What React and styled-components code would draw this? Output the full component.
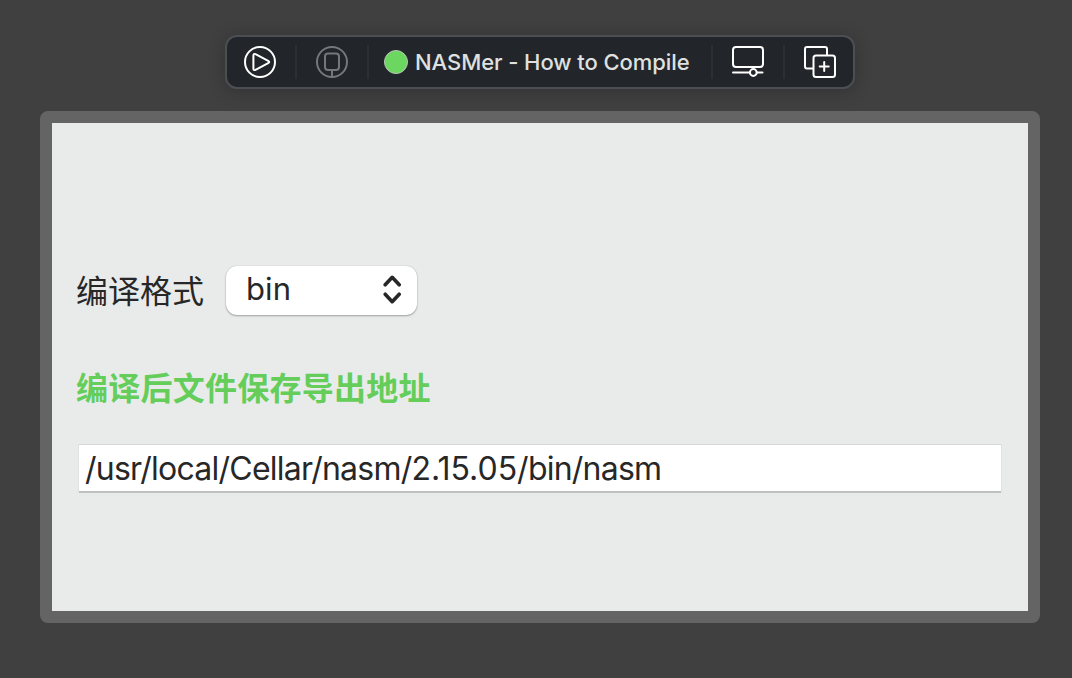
import React from "react";
import styled, { createGlobalStyle } from "styled-components";

const GlobalStyle = createGlobalStyle`
  * { box-sizing: border-box; }
  body {
    margin: 0;
    background: #404040;
    font-family: Inter, "Noto Sans CJK SC", sans-serif;
  }
`;

const Desktop = styled.div`
  height: 678px;
  padding: 35px 32px 0 40px;
  display: flex;
  flex-direction: column;
  align-items: center;
  gap: 22px;
  overflow: hidden;
`;

const Toolbar = styled.header`
  display: flex;
  align-items: center;
  width: 630px;
  height: 54px;
  border: 2px solid #4b4f54;
  border-radius: 12px;
  background: #222529;
  box-shadow: 0 2px 18px rgba(0, 0, 0, 0.24);
`;

const ToolButton = styled.button`
  display: flex;
  flex-shrink: 0;
  align-items: center;
  justify-content: center;
  width: ${(p) => p.$width || 70}px;
  height: 50px;
  padding: 0;
  border: 0;
  background: none;
  color: ${(p) => (p.$dim ? "#75777a" : "#ffffff")};
`;

const Divider = styled.span`
  flex-shrink: 0;
  width: 2px;
  height: 34px;
  background: #2c2f33;
`;

const Title = styled.div`
  display: flex;
  flex-shrink: 0;
  align-items: center;
  width: 342px;
  padding-left: 15px;
  color: #dfe0e0;
  font-size: 22px;
  line-height: 28px;
  font-weight: 500;
  letter-spacing: -0.07px;
  white-space: nowrap;
`;

const Status = styled.span`
  width: 24px;
  height: 24px;
  margin-right: 7px;
  border: 1px solid #b9c4b7;
  border-radius: 50%;
  background: #6bd660;
`;

const Canvas = styled.main`
  position: relative;
  display: flex;
  flex-direction: column;
  width: 1000px;
  height: 512px;
  padding: 141px 25px 0 24px;
  border: 12px solid #646464;
  border-radius: 8px;
  background: #e9ebea;
  background-clip: padding-box;
  color: #272727;
  font-size: 32px;
`;

const FormatRow = styled.div`
  display: flex;
  align-items: center;
  height: 52px;
  gap: 22px;
`;

const Label = styled.label`
  width: 128px;
  padding-top: 4px;
  font-weight: 400;
  line-height: 48px;
  white-space: nowrap;
`;

const Select = styled.button`
  display: flex;
  align-items: center;
  justify-content: space-between;
  width: 191px;
  height: 49px;
  padding: 0 14px 2px 20px;
  border: 0;
  border-radius: 11px;
  background: #fff;
  box-shadow: 0 0 1px rgba(0, 0, 0, 0.25), 0 1px 2px rgba(0, 0, 0, 0.3);
  color: #272727;
  font: inherit;
  font-size: 31px;
`;

const Choice = styled.span`
  padding-bottom: 2px;
  letter-spacing: 0.1px;
`;

const Heading = styled.h1`
  margin: 49px 0 0;
  color: #65cd5a;
  font-size: 32px;
  line-height: 48px;
  font-weight: 700;
  letter-spacing: 0.25px;
  white-space: nowrap;
`;

const PathField = styled.div`
  width: 922px;
  height: 49px;
  margin: 31px 0 0 3px;
  padding-left: 6px;
  border-top: 1px solid #d5d7d6;
  border-bottom: 2px solid #bfc0c0;
  box-shadow: 1px 0 0 #e0e2e1, -1px 0 0 #e0e2e1;
  background: #fff;
  line-height: 47px;
  letter-spacing: -0.76px;
  white-space: nowrap;
`;

const Version = styled.span`
  letter-spacing: 0;
`;

const Icon = ({ children, size = 34 }) => (
  <svg
    width={size}
    height={size}
    viewBox="0 0 34 34"
    fill="none"
    stroke="currentColor"
    strokeWidth="2"
    strokeLinecap="round"
    strokeLinejoin="round"
  >
    {children}
  </svg>
);

export default function App() {
  return (
    <>
      <GlobalStyle />
      <Desktop>
        <Toolbar>
          <ToolButton $width={68}>
            <Icon>
              <g transform="translate(-1 0)">
                <circle cx="17" cy="17" r="15" />
                <path d="M10.4 10.5v13q0 2.3 2.1 1.3L25.2 18.1q2.1-1.1 0-2.2L12.5 9.2q-2.1-1-2.1 1.3Z" />
              </g>
            </Icon>
          </ToolButton>
          <Divider />
          <ToolButton $dim>
            <Icon>
              <circle cx="17" cy="17" r="15" />
              <rect x="10" y="8.5" width="14" height="16.5" rx="3" />
              <path d="M17 25v7" />
            </Icon>
          </ToolButton>
          <Divider />
          <Title>
            <Status />
            <span>NASMer - How to Compile</span>
          </Title>
          <Divider />
          <ToolButton>
            <Icon>
              <rect x="2" y="2" width="30" height="20" rx="3" />
              <path d="M2 27.5h16M26 27.5h5.5" />
              <circle cx="22.3" cy="27.5" r="3.4" />
            </Icon>
          </ToolButton>
          <Divider />
          <ToolButton>
            <Icon>
              <path d="M10 23.5H4q-2 0-2-2V4q0-2 2-2h18q2 0 2 2v5.5" />
              <rect x="10.5" y="10.5" width="21.5" height="21.5" rx="2.5" />
              <path d="M21.2 17v9M16.7 21.5h9" />
            </Icon>
          </ToolButton>
        </Toolbar>
        <Canvas>
          <FormatRow>
            <Label>编译格式</Label>
            <Select>
              <Choice>bin</Choice>
              <svg width="22" height="30" viewBox="0 0 22 30" fill="none" stroke="#272727" strokeWidth="3.6" strokeLinecap="round" strokeLinejoin="round">
                <path d="m4.2 10.8 7-7.5 7 7.5M4.2 20.2l7 7.5 7-7.5" />
              </svg>
            </Select>
          </FormatRow>
          <Heading>编译后文件保存导出地址</Heading>
          <PathField>
            /usr/local/Cellar/nasm/<Version>2.15.05</Version>/bin/nasm
          </PathField>
        </Canvas>
      </Desktop>
    </>
  );
}
